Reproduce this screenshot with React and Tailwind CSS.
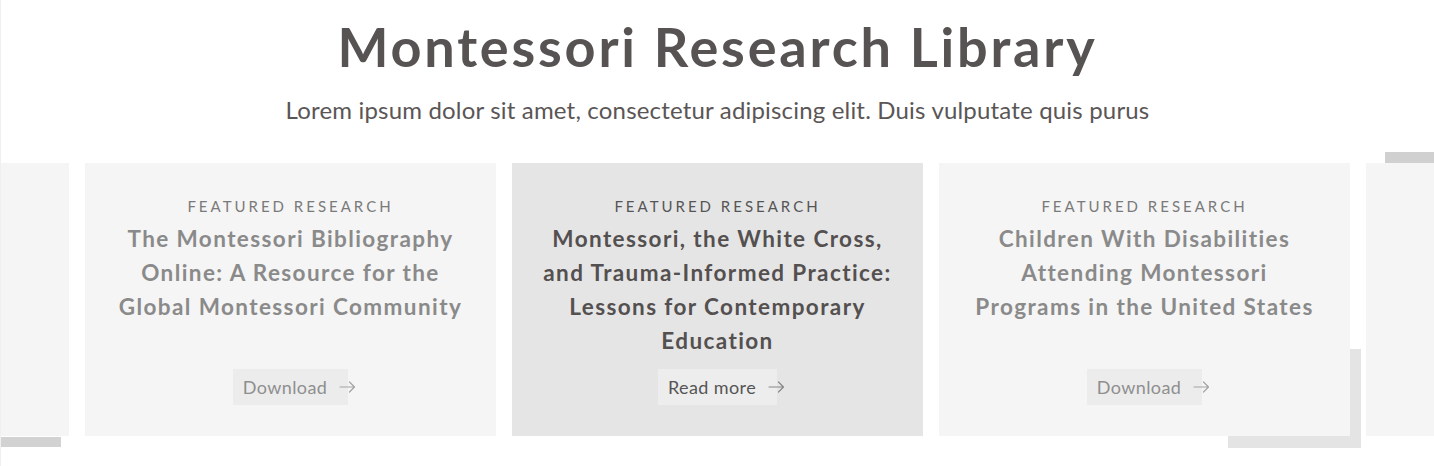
import React from 'react';

const slides = [
  { title: '', cta: '' },
  {
    title: 'The Montessori Bibliography Online: A Resource for the Global Montessori Community',
    cta: 'Download',
  },
  {
    title: 'Montessori, the White Cross, and Trauma-Informed Practice: Lessons for Contemporary Education',
    cta: 'Read more',
    active: true,
  },
  {
    title: 'Children With Disabilities Attending Montessori Programs in the United States',
    cta: 'Download',
    shadow: true,
  },
  { title: '', cta: '' },
];

const Arrow = ({ className }) => (
  <svg width="17" height="12" viewBox="0 0 17 12" fill="none" className={className}>
    <path d="M1 6h14.5M10.5 1l5 5-5 5" stroke="currentColor" strokeWidth="1.2" strokeLinecap="round" strokeLinejoin="round" />
  </svg>
);

const Card = ({ slide, index }) => {
  const active = slide.active;
  return (
    <div className="relative w-[411px] h-[273px] shrink-0">
      {slide.shadow && (
        <div className="absolute left-[289px] top-[186px] w-[133px] h-[99px] bg-[#e4e4e4]" />
      )}
      {index === 0 && (
        <div className="absolute right-[8px] top-[274px] w-[61px] h-[10px] bg-[#d2d2d2]" />
      )}
      {index === 4 && (
        <div className="absolute left-[19px] top-[-11px] w-[60px] h-[11px] bg-[#d0d0d0]" />
      )}
      <div
        className={`relative h-full flex flex-col items-center text-center px-[26px] pt-[34px] pb-[31px] ${
          active ? 'bg-[#e5e5e5]' : 'bg-[#f5f5f5]'
        }`}
      >
        {slide.title && (
          <>
            <div className={`text-[15px] leading-[18px] tracking-[0.2em] ${active ? 'text-[#555]' : 'text-[#7a7a7a]'}`}>
              FEATURED RESEARCH
            </div>
            <h3
              className={`mt-[7px] text-[22.5px] leading-[34px] font-bold tracking-[1.4px] ${
                active ? 'text-[#545050]' : 'text-[#8a8a8a]'
              }`}
            >
              {slide.title}
            </h3>
            <button
              className={`mt-auto inline-flex items-center h-[36px] pl-[10px] text-[18px] tracking-[0.4px] ${
                active ? 'bg-[#ededed] text-[#555]' : 'bg-[#ececec] text-[#8f8f8f]'
              }`}
            >
              <span>{slide.cta}</span>
              <Arrow className={`ml-[12px] -mr-[8px] ${active ? 'text-[#888]' : 'text-[#a3a3a3]'}`} />
            </button>
          </>
        )}
      </div>
    </div>
  );
};

export default function App() {
  return (
    <div
      className="w-[1434px] h-[466px] bg-white overflow-hidden border-l border-[#f0f0f0]"
      style={{ fontFamily: 'Lato, "Open Sans", sans-serif' }}
    >
      <div className="flex flex-col items-center pt-[14px]">
        <h1 className="text-[54px] leading-[66px] font-bold tracking-[2.8px] text-[#575353]">
          Montessori Research Library
        </h1>
        <p className="mt-[15px] text-[24px] leading-[30px] tracking-[0.18px] text-[#5a5656]">
          Lorem ipsum dolor sit amet, consectetur adipiscing elit. Duis vulputate quis purus
        </p>
      </div>
      <div className="mt-[38px] flex gap-[16px] -ml-[343px]">
        {slides.map((s, i) => (
          <Card key={i} slide={s} index={i} />
        ))}
      </div>
    </div>
  );
}
